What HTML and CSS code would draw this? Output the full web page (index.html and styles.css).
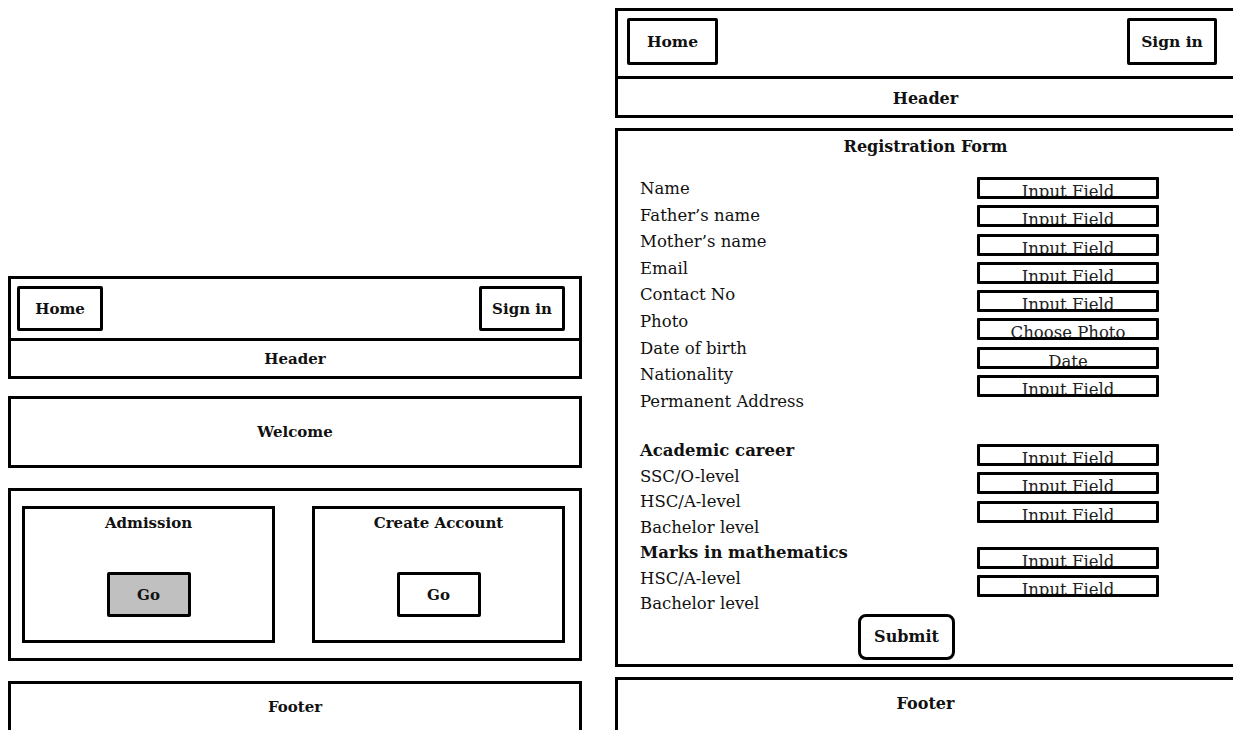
FILE: index.html
```html
<!DOCTYPE html>
<html>
<head>
<meta charset="utf-8">
<link rel="stylesheet" href="styles.css">
</head>
<body>
<div class="page">
  <div class="mock mock-home">
    <div class="topbox">
      <div class="navrow">
        <div class="navbtn">Home</div>
        <div class="navbtn">Sign in</div>
      </div>
      <div class="headrow">Header</div>
    </div>
    <div class="welcome">Welcome</div>
    <div class="cards">
      <div class="card">
        <div class="card-title">Admission</div>
        <div class="go go-active">Go</div>
      </div>
      <div class="card">
        <div class="card-title">Create Account</div>
        <div class="go">Go</div>
      </div>
    </div>
    <div class="footer">Footer</div>
  </div>

  <div class="mock mock-form">
    <div class="topbox">
      <div class="navrow">
        <div class="navbtn navbtn-home">Home</div>
        <div class="navbtn navbtn-sign">Sign in</div>
      </div>
      <div class="headrow">Header</div>
    </div>
    <div class="formbox">
      <div class="form-title">Registration Form</div>
      <div class="form-grid">
        <div class="labels">
          <div class="lbl">Name</div>
          <div class="lbl">Father’s name</div>
          <div class="lbl">Mother’s name</div>
          <div class="lbl">Email</div>
          <div class="lbl">Contact No</div>
          <div class="lbl">Photo</div>
          <div class="lbl">Date of birth</div>
          <div class="lbl">Nationality</div>
          <div class="lbl">Permanent Address</div>
          <div class="lbl lbl-tight lbl-gap lbl-bold">Academic career</div>
          <div class="lbl lbl-tight">SSC/O-level</div>
          <div class="lbl lbl-tight">HSC/A-level</div>
          <div class="lbl lbl-tight">Bachelor level</div>
          <div class="lbl lbl-tight lbl-bold">Marks in mathematics</div>
          <div class="lbl lbl-tight">HSC/A-level</div>
          <div class="lbl lbl-tight">Bachelor level</div>
        </div>
        <div class="fields">
          <div class="field">Input Field</div>
          <div class="field">Input Field</div>
          <div class="field">Input Field</div>
          <div class="field">Input Field</div>
          <div class="field">Input Field</div>
          <div class="field">Choose Photo</div>
          <div class="field">Date</div>
          <div class="field">Input Field</div>
          <div class="field field-group">Input Field</div>
          <div class="field">Input Field</div>
          <div class="field">Input Field</div>
          <div class="field field-group2">Input Field</div>
          <div class="field">Input Field</div>
        </div>
      </div>
      <div class="submit-row"><div class="submit">Submit</div></div>
    </div>
    <div class="footer footer-right">Footer</div>
  </div>
</div>
</body>
</html>
```

FILE: styles.css
```css
html, body {
  margin: 0;
  padding: 0;
  overflow: hidden;
  background: #ffffff;
}

body {
  width: 1233px;
  height: 730px;
  font-family: "DejaVu Serif", "Liberation Serif", serif;
  color: #111;
  font-size: 16px;
}

.page {
  display: flex;
  align-items: flex-start;
}

.mock {
  display: flex;
  flex-direction: column;
  flex-shrink: 0;
}

.mock-home {
  width: 574px;
  margin-left: 8px;
  padding-top: 276px;
}

.mock-form {
  width: 621px;
  margin-left: 33px;
  padding-top: 8px;
}

.topbox {
  border: 3px solid #000;
  display: flex;
  flex-direction: column;
}

.navrow {
  height: 59px;
  display: flex;
  align-items: center;
  justify-content: space-between;
  padding: 0 14px 0 6px;
}

.navbtn {
  border: 3px solid #000;
  border-radius: 2px;
  width: 86px;
  height: 45px;
  box-sizing: border-box;
  display: flex;
  align-items: center;
  justify-content: center;
  font-weight: bold;
  font-size: 15px;
}

.headrow {
  border-top: 3px solid #000;
  height: 35px;
  display: flex;
  align-items: center;
  justify-content: center;
  font-weight: bold;
  font-size: 15px;
}

.welcome {
  margin-top: 17px;
  height: 72px;
  box-sizing: border-box;
  border: 3px solid #000;
  display: flex;
  align-items: center;
  justify-content: center;
  font-weight: bold;
  font-size: 15px;
}

.cards {
  margin-top: 20px;
  height: 173px;
  box-sizing: border-box;
  border: 3px solid #000;
  display: flex;
  gap: 37px;
  padding: 15px 14px 0 11px;
}

.card {
  width: 253px;
  height: 137px;
  box-sizing: border-box;
  border: 3px solid #000;
  display: flex;
  flex-direction: column;
  align-items: center;
}

.card-title {
  font-weight: bold;
  font-size: 15px;
  margin-top: 4px;
  line-height: 20px;
}

.go {
  margin-top: 39px;
  width: 84px;
  height: 45px;
  box-sizing: border-box;
  border: 3px solid #000;
  border-radius: 2px;
  display: flex;
  align-items: center;
  justify-content: center;
  font-weight: bold;
  font-size: 15px;
}

.go-active {
  background: #c0c0c0;
}

.footer {
  margin-top: 20px;
  height: 80px;
  box-sizing: border-box;
  border: 3px solid #000;
  display: flex;
  justify-content: center;
  padding-top: 14px;
  font-weight: bold;
  font-size: 15px;
}

/* right mockup */
.mock-form .navrow {
  height: 65px;
  padding: 0 16px 4px 9px;
  box-sizing: border-box;
}

.mock-form .navbtn {
  font-size: 15.5px;
}

.navbtn-home {
  width: 91px;
  height: 47px;
}

.navbtn-sign {
  width: 90px;
  height: 47px;
}

.mock-form .headrow {
  height: 39px;
  font-size: 16px;
  padding-top: 2px;
  box-sizing: border-box;
}

.formbox {
  margin-top: 10px;
  height: 539px;
  box-sizing: border-box;
  border: 3px solid #000;
  display: flex;
  flex-direction: column;
}

.form-title {
  text-align: center;
  font-weight: bold;
  font-size: 16px;
  line-height: 20px;
  margin-top: 6px;
}

.form-grid {
  display: flex;
  margin-top: 19px;
  padding-left: 22px;
}

.labels {
  width: 337px;
  display: flex;
  flex-direction: column;
}

.lbl {
  font-size: 16.5px;
  line-height: 26.6px;
  white-space: nowrap;
}

.lbl-tight {
  line-height: 25.5px;
}

.lbl-gap {
  margin-top: 23px;
}

.lbl-bold {
  font-weight: bold;
}

.fields {
  display: flex;
  flex-direction: column;
  gap: 6.3px;
  padding-top: 1px;
}

.field {
  width: 182px;
  height: 22px;
  box-sizing: border-box;
  border: 3px solid #000;
  border-radius: 1px;
  overflow: hidden;
  text-align: center;
  font-size: 16.5px;
  line-height: 19px;
  padding-top: 2px;
  white-space: nowrap;
  color: #222;
}

.field-group {
  margin-top: 40.7px;
}

.field-group2 {
  margin-top: 18.1px;
}

.submit-row {
  display: flex;
  margin-top: -3px;
  padding-left: 240px;
}

.submit {
  width: 97px;
  height: 46px;
  box-sizing: border-box;
  border: 3px solid #000;
  border-radius: 8px;
  display: flex;
  align-items: center;
  justify-content: center;
  font-weight: bold;
  font-size: 16px;
}

.footer-right {
  margin-top: 10px;
  font-size: 16px;
}
```
